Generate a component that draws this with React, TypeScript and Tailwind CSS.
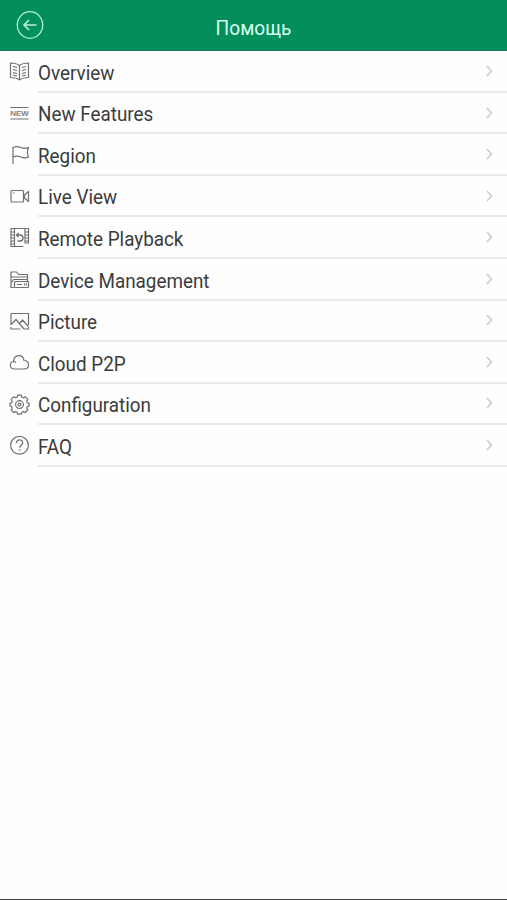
import type { ReactNode } from "react";

type HelpItem = {
  label: string;
  icon: ReactNode;
};

const helpItems: HelpItem[] = [
  {
    label: "Overview",
    icon: (
      <>
        <path d="M10.500 4.500C8 2.500 5 2 1.500 2v14.500c3.500 0 6.500.5 9 2.500 2.500-2 5.500-2.500 9-2.500V2c-3.500 0-6.500.5-9 2.500v14.500" />
        <path d="M4 5.500l4 1M4 8.500l4 1M4 11.500l4 1M4 14l4 1M17 5.500l-4 1M17 8.500l-4 1M17 11.500l-4 1M17 14l-4 1" />
      </>
    ),
  },
  {
    label: "New Features",
    icon: (
      <>
        <path d="M1.500 4.500h18M1.500 16h18" />
        <text x="1.200" y="12.800" textLength="18.500" lengthAdjust="spacingAndGlyphs" className="fill-[#666] font-['Liberation_Sans'] text-[7.500px]" stroke="#666" strokeWidth=".15">
          NEW
        </text>
      </>
    ),
  },
  {
    label: "Region",
    icon: <path d="M4 20V3.500c3-1.800 5.500-1 8 0s5 1.200 7.500 0c-1.500 3.500-1.500 6.500 0 9.500-2.500 1.200-5 1-7.500 0s-5-1.500-8 0" />,
  },
  {
    label: "Live View",
    icon: (
      <>
        <rect x="2" y="4.500" width="12.500" height="11.500" rx="1" />
        <path d="M15.500 9l4-3.500v10l-4-3.500zM4 7h1.500" />
      </>
    ),
  },
  {
    label: "Remote Playback",
    icon: (
      <>
        <path d="M14.500 19.500H2V1.500h17.500V16h-3.500V1.500M5.500 1.500v18" />
        <path d="M2 5h3M2 8h3M2 11h3M2 14h3M2 17h3M16 5h3.500M16 8h3.500M16 11h3.500M16 14h3.500" />
        <path d="M9.500 6L7.500 8l2 2M7.500 8h3.500c4 0 4 6 0 6H8.500" strokeWidth="1.400" />
      </>
    ),
  },
  {
    label: "Device Management",
    icon: (
      <>
        <path d="M5 18.500H2V3h5.500l2 2.500h9V11M2 8h16.500" />
        <rect x="5.500" y="12.500" width="14" height="6" rx=".8" />
        <path d="M2.500 13.500l2-3h13l1.800 2.500M8 15.500h5M15.500 14.500v2M17.500 14.500v2" />
      </>
    ),
  },
  {
    label: "Picture",
    icon: (
      <>
        <path d="M2 14V2.500h17.500V14M2 16v2h9.500M15 18h4.500v-2" />
        <path d="M2 13.500L7 8.500l8 9.500M10.500 12.500l3-3.500 6 6.500" />
      </>
    ),
  },
  {
    label: "Cloud P2P",
    icon: <path d="M5.500 17C.2 17 .2 10 4.500 9.500 5 1.800 14 1.800 15 8.500c6 0 6 8.500 0 8.500zM4.500 9.500c1.200 0 2 .4 2.500 1" />,
  },
  {
    label: "Configuration",
    icon: (
      <>
        <path d="M8.700 1.200h3.600l.7 2 1.300.6 2-.9 2.500 2.500-1 2 .6 1.300 1.700.7v2.500l-1.800.8-.6 1.300 1 2-2.500 2.500-2-.9-1.300.6-.7 2H8.700l-.7-2-1.300-.6-2 .9-2.500-2.500 1-2-.6-1.300-1.700-.8V9.400l1.700-.7.6-1.300-1-2 2.500-2.500 2 .9L8 3.200z" />
        <circle cx="10.500" cy="10.600" r="3.900" />
        <circle cx="10.500" cy="10.600" r="1.500" />
      </>
    ),
  },
  {
    label: "FAQ",
    icon: (
      <>
        <circle cx="10.500" cy="10.300" r="8.900" />
        <path d="M7.500 8c0-4.200 6.200-4.200 6.200-.3 0 2.300-3 2.300-3 5M10.700 14.200v1.600" />
      </>
    ),
  },
];

function Header() {
  return (
    <header className="grid h-[51px] shrink-0 grid-cols-[60px_1fr_60px] items-center border-b border-[#14805a] bg-[#038f5b]">
      <button aria-label="Back" className="ml-4">
        <svg viewBox="0 0 28 28" className="h-7 w-7 fill-none stroke-[#b5f3d6]" strokeWidth="1.300">
          <ellipse cx="14" cy="14" rx="12.700" ry="13.300" />
          <path d="M20.500 14H8M13 9L8 14l5 5" strokeWidth="1.600" />
        </svg>
      </button>
      <h1 className="scale-x-[0.955] pt-1.5 text-center text-xl leading-6 text-[#d9fff0]">Помощь</h1>
    </header>
  );
}

function HelpRow({ label, icon }: HelpItem) {
  return (
    <li className="flex h-[41.560px] pl-[9px]">
      <svg viewBox="0 0 21 21" className="mt-[10px] h-[21px] w-[21px] shrink-0 fill-none stroke-[#707070]" strokeWidth="1.200" strokeLinejoin="round">
        {icon}
      </svg>
      <div className="ml-2 flex flex-1 items-center justify-between border-b-2 border-[#e9e9e9] pr-[14px]">
        <span className="origin-left scale-x-[0.942] pt-[3.500px] text-xl leading-6 text-[#3b3b3b]">{label}</span>
        <svg viewBox="0 0 7 12" className="h-3 w-[7px] fill-none stroke-[#cacaca]" strokeWidth="1.500">
          <path d="M1 1l4.500 5L1 11" />
        </svg>
      </div>
    </li>
  );
}

export default function App() {
  return (
    <main className="flex h-screen flex-col border-b border-[#444] bg-[#fefefe] font-['Roboto',sans-serif]">
      <Header />
      <ul className="pt-[0.300px]">
        {helpItems.map((item) => (
          <HelpRow key={item.label} {...item} />
        ))}
      </ul>
    </main>
  );
}
